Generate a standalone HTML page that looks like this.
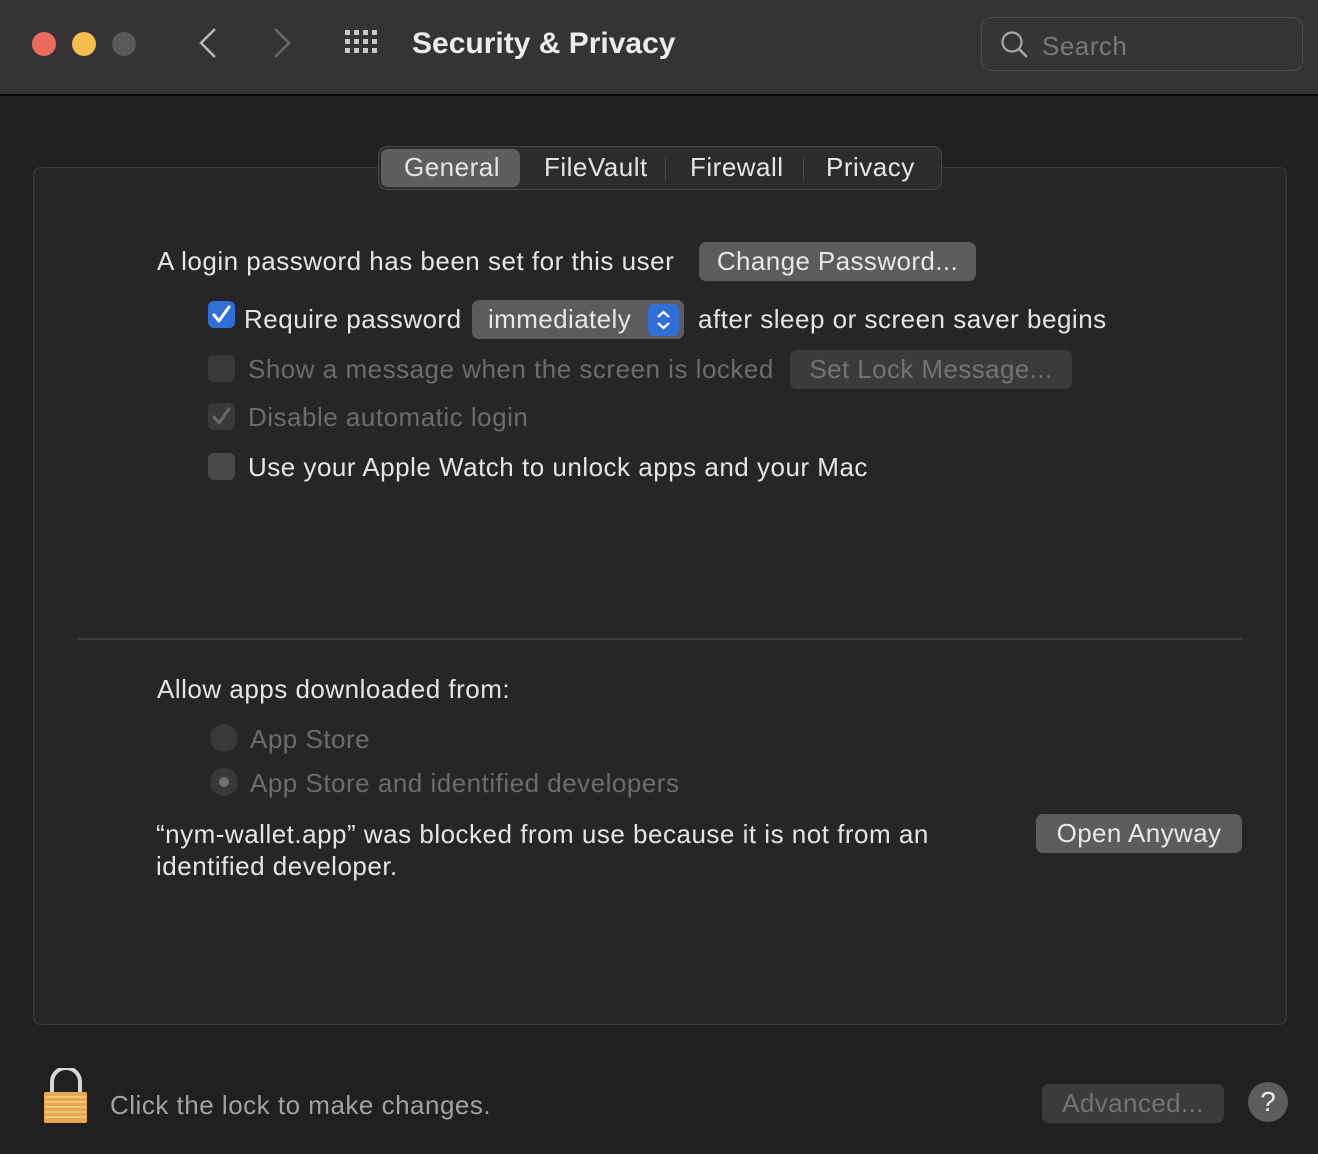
<!DOCTYPE html>
<html><head><meta charset="utf-8"><style>
*{margin:0;padding:0;box-sizing:border-box}
body{width:1318px;height:1154px;background:#221f21;font-family:"Liberation Sans",sans-serif;color:#e6e4e6;position:relative;overflow:hidden}
.a{position:absolute;white-space:nowrap}
.t{font-size:26px;line-height:30px;letter-spacing:0.5px}
.dim{color:#6e6b6e}
.btn{position:absolute;background:#5d5b5d;border-radius:7px;color:#e8e6e8;font-size:26px;letter-spacing:0.4px;text-align:center;line-height:38px;height:39px}
.cb{position:absolute;width:27px;height:27px;border-radius:6px;background:#4a484a}
.cbd{background:#3a383a}
</style></head><body>
<div class="a" style="left:0;top:0;width:1318px;height:96px;background:#353336;border-bottom:2px solid #0c0b0c"></div>
<div class="a" style="left:32px;top:32px;width:24px;height:24px;border-radius:50%;background:#ed6a5e"></div>
<div class="a" style="left:72px;top:32px;width:24px;height:24px;border-radius:50%;background:#f4bf4f"></div>
<div class="a" style="left:112px;top:32px;width:24px;height:24px;border-radius:50%;background:#5b595b"></div>
<svg class="a" style="left:195px;top:26px" width="100" height="36"><path d="M20 3 L6 17 L20 31" stroke="#b8b6b8" stroke-width="2.5" fill="none"/><path d="M80 3 L94 17 L80 31" stroke="#6a686a" stroke-width="2.5" fill="none"/></svg>
<svg class="a" style="left:345px;top:30px" width="38" height="28"><g fill="#c8c6c8"><rect x="0" y="0" width="5" height="5"/><rect x="9" y="0" width="5" height="5"/><rect x="18" y="0" width="5" height="5"/><rect x="27" y="0" width="5" height="5"/><rect x="0" y="9" width="5" height="5"/><rect x="9" y="9" width="5" height="5"/><rect x="18" y="9" width="5" height="5"/><rect x="27" y="9" width="5" height="5"/><rect x="0" y="18" width="5" height="5"/><rect x="9" y="18" width="5" height="5"/><rect x="18" y="18" width="5" height="5"/><rect x="27" y="18" width="5" height="5"/></g></svg>
<div class="a" style="left:412px;top:24px;font-size:30px;font-weight:bold;color:#ececec;line-height:40px">Security &amp; Privacy</div>
<div class="a" style="left:981px;top:17px;width:322px;height:54px;border:1.5px solid #4e4c4e;border-radius:10px;background:#363437"></div>
<svg class="a" style="left:1000px;top:30px" width="30" height="30"><circle cx="12" cy="12" r="9.5" stroke="#a8a6a8" stroke-width="2.2" fill="none"/><path d="M19 19 L27 27" stroke="#a8a6a8" stroke-width="2.5"/></svg>
<div class="a t" style="left:1042px;top:31px;color:#7a787a">Search</div>

<div class="a" style="left:33px;top:167px;width:1254px;height:858px;border:1.5px solid #3c3a3c;border-radius:8px;background:#282528"></div>
<div class="a" style="left:378px;top:146px;width:564px;height:44px;border:1.5px solid #4a484a;border-radius:9px;background:#2e2b2e"></div>
<div class="a" style="left:381px;top:149px;width:139px;height:38px;border-radius:7px;background:#5f5d5f"></div>
<div class="a t" style="left:404px;top:152px">General</div>
<div class="a t" style="left:544px;top:152px">FileVault</div>
<div class="a" style="left:665px;top:157px;width:1px;height:24px;background:#4a484a"></div>
<div class="a t" style="left:690px;top:152px">Firewall</div>
<div class="a" style="left:803px;top:157px;width:1px;height:24px;background:#4a484a"></div>
<div class="a t" style="left:826px;top:152px">Privacy</div>

<div class="a t" style="left:157px;top:246px">A login password has been set for this user</div>
<div class="btn" style="left:699px;top:242px;width:277px">Change Password...</div>

<div class="cb" style="left:208px;top:301px;background:#2f6fd6"></div>
<svg class="a" style="left:208px;top:301px" width="27" height="27"><path d="M6 14 L11 20 L21 6" stroke="#fff" stroke-width="3" fill="none" stroke-linecap="round" stroke-linejoin="round"/></svg>
<div class="a t" style="left:244px;top:304px">Require password</div>
<div class="btn" style="left:472px;top:300px;width:212px;text-align:left;padding-left:16px">immediately</div>
<div class="a" style="left:648px;top:304px;width:31px;height:32px;border-radius:6px;background:#2f6fd6"></div>
<svg class="a" style="left:648px;top:304px" width="31" height="32"><path d="M10 13 L15.5 8 L21 13 M10 19 L15.5 24 L21 19" stroke="#fff" stroke-width="2.2" fill="none"/></svg>
<div class="a t" style="left:698px;top:304px">after sleep or screen saver begins</div>

<div class="cb cbd" style="left:208px;top:355px"></div>
<div class="a t dim" style="left:248px;top:354px">Show a message when the screen is locked</div>
<div class="btn" style="left:790px;top:350px;width:282px;background:#3c3a3c;color:#757275">Set Lock Message...</div>

<div class="cb cbd" style="left:208px;top:403px"></div>
<svg class="a" style="left:208px;top:403px" width="27" height="27"><path d="M6 14 L11 20 L21 6" stroke="#6a686a" stroke-width="3" fill="none" stroke-linecap="round" stroke-linejoin="round"/></svg>
<div class="a t dim" style="left:248px;top:402px">Disable automatic login</div>

<div class="cb" style="left:208px;top:453px"></div>
<div class="a t" style="left:248px;top:452px">Use your Apple Watch to unlock apps and your Mac</div>

<div class="a" style="left:78px;top:638px;width:1164px;height:1.5px;background:#3e3c3e"></div>

<div class="a t" style="left:157px;top:674px">Allow apps downloaded from:</div>
<div class="a" style="left:210px;top:724px;width:28px;height:28px;border-radius:50%;background:#3a383a"></div>
<div class="a t dim" style="left:250px;top:724px">App Store</div>
<div class="a" style="left:210px;top:768px;width:28px;height:28px;border-radius:50%;background:#3a383a"></div>
<div class="a" style="left:219px;top:777px;width:10px;height:10px;border-radius:50%;background:#727072"></div>
<div class="a t dim" style="left:250px;top:768px">App Store and identified developers</div>

<div class="a t" style="left:156px;top:818px;line-height:32px">“nym-wallet.app” was blocked from use because it is not from an<br>identified developer.</div>
<div class="btn" style="left:1036px;top:814px;width:206px">Open Anyway</div>

<svg class="a" style="left:42px;top:1068px" width="48" height="58"><path d="M10 26 V14 A14 14 0 0 1 38 14 V26" stroke="#d8d8d8" stroke-width="4" fill="none"/><rect x="2" y="24" width="43" height="31" rx="2" fill="#e6a952"/><g stroke="#f5cf86" stroke-width="1.5"><path d="M3 29H44M3 34H44M3 39H44M3 44H44M3 49H44"/></g></svg>
<div class="a t" style="left:110px;top:1090px;color:#a3a1a3">Click the lock to make changes.</div>
<div class="btn" style="left:1042px;top:1084px;width:182px;background:#3c3a3c;color:#757275">Advanced...</div>
<div class="a" style="left:1248px;top:1082px;width:40px;height:40px;border-radius:50%;background:#5e5c5e;color:#eee;font-size:28px;text-align:center;line-height:40px">?</div>
</body></html>
